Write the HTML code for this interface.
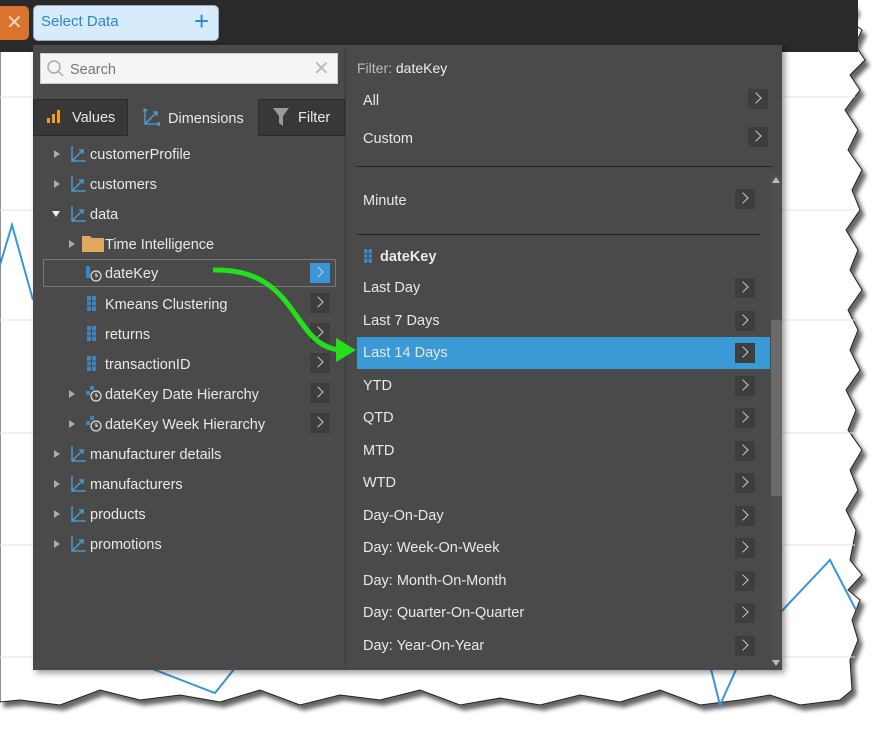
<!DOCTYPE html>
<html><head><meta charset="utf-8"><style>
*{margin:0;padding:0;box-sizing:border-box}
body{width:889px;height:739px;background:#fff;position:relative;overflow:hidden;font-family:"Liberation Sans",sans-serif;font-size:14.5px;color:#e8e8e8}
.a{position:absolute}
.pane{background:#4a4a4a}
.row{position:absolute;height:20px;line-height:22px;white-space:nowrap}
.chev{position:absolute;width:20px;height:20px;background:#3e3e3e}
.chev:after{content:"";position:absolute;left:4px;top:5px;width:7px;height:7px;border-right:1.5px solid #ccc;border-top:1.5px solid #ccc;transform:rotate(45deg)}
.tri{position:absolute;width:0;height:0;border-left:6px solid #aaa;border-top:4px solid transparent;border-bottom:4px solid transparent}
.trid{position:absolute;width:0;height:0;border-top:6px solid #eee;border-left:4px solid transparent;border-right:4px solid transparent}
</style></head><body>
<svg class="a" style="left:0;top:0" width="889" height="739">
<defs><filter id="s"><feDropShadow dx="4" dy="5" stdDeviation="2" flood-color="#000" flood-opacity=".6"/></filter></defs>
<path filter="url(#s)" fill="#fff" stroke="#222" stroke-width="1" d="M0,0 L850,0 856,10 848,20 862,30 855,45 865,60 850,75 860,90 845,110 858,130 848,150 862,170 852,190 860,210 846,230 858,250 850,270 862,290 848,310 858,330 850,350 860,370 846,390 856,410 848,430 862,450 850,470 858,490 846,510 856,530 850,560 862,575 848,590 860,600 852,620 858,640 850,660 852,690 840,700 800,705 770,695 740,700 700,705 660,690 620,702 580,695 540,705 500,698 460,705 420,690 380,700 340,695 300,705 260,690 220,702 180,695 140,700 100,690 60,705 20,700 0,702Z"/>
<rect x="0" y="0" width="858" height="52" fill="#2a2a2a"/>
<g stroke="#e6e6e6" stroke-width="1"><line x1="0" y1="97" x2="855" y2="97"/><line x1="0" y1="210" x2="855" y2="210"/><line x1="0" y1="320" x2="855" y2="320"/><line x1="0" y1="433" x2="855" y2="433"/><line x1="0" y1="545" x2="855" y2="545"/><line x1="0" y1="657" x2="855" y2="657"/></g>
<g stroke="#3a96d8" stroke-width="2" fill="none"><polyline points="0,265 12,225 33,300"/><polyline points="150,668 215,693 235,668"/><polyline points="710,665 720,705 745,650 830,560 856,610"/></g>
</svg>
<div class="a" style="left:0;top:6px;width:29px;height:34px;background:#d9742f;border-radius:0 5px 5px 0"></div>
<div class="a" style="left:6px;top:10px;color:#f3d6c0;font-size:20px">✕</div>
<div class="a" style="left:33px;top:5px;width:186px;height:36px;background:#d6ebfb;border-radius:5px;border:1px solid #9ab"></div>
<div class="a" style="left:41px;top:13px;color:#2d86c9;font-size:15px">Select Data</div>
<div class="a" style="left:194px;top:6px;color:#2d86c9;font-size:26px">+</div>
<div class="a pane" style="left:33px;top:45px;width:749px;height:625px;box-shadow:3px 3px 6px rgba(0,0,0,.4)"></div>
<div class="a" style="left:345px;top:45px;width:1px;height:625px;background:#3a3a3a"></div>
<div class="a" style="left:40px;top:53px;width:298px;height:31px;background:#f4f4f4;border:1px solid #ccc"></div>
<svg class="a" style="left:46px;top:59px" width="20" height="20"><circle cx="8" cy="8" r="6" stroke="#aaa" stroke-width="1.5" fill="none"/><line x1="12" y1="12" x2="17" y2="17" stroke="#aaa" stroke-width="1.5"/></svg>
<div class="a" style="left:70px;top:62px;color:#777">Search</div>
<div class="a" style="left:313px;top:56px;color:#bbb;font-size:20px">✕</div>
<div class="a" style="left:33px;top:99px;width:95px;height:37px;background:#383838;border:1px solid #2c2c2c"></div>
<div class="a" style="left:258px;top:99px;width:87px;height:37px;background:#383838;border:1px solid #2c2c2c"></div>
<svg class="a" style="left:47px;top:110px" width="16" height="14"><rect x="0" y="8" width="3" height="5" fill="#f59a1e"/><rect x="5" y="4" width="3" height="9" fill="#f59a1e"/><rect x="10" y="0" width="3" height="13" fill="#f59a1e"/></svg>
<div class="a" style="left:72px;top:110px">Values</div>
<svg class="a" style="left:143px;top:108px" width="18" height="18" fill="none" stroke="#4aa3dd" stroke-width="1.3"><path d="M2,1V16H17M2,16L14,4M10,4H14V8M2,1L0,3M2,1L4,3M17,16L15,14M17,16L15,18"/></svg>
<div class="a" style="left:168px;top:111px">Dimensions</div>
<svg class="a" style="left:273px;top:108px" width="16" height="18"><path d="M0,0H16L10,8V18L6,15V8Z" fill="#999"/></svg>
<div class="a" style="left:298px;top:110px">Filter</div>

<div class="a" style="left:43px;top:259px;width:293px;height:28px;border:1px solid #777"></div>
<div class="tri" style="left:54px;top:150px"></div><div class="row" style="left:90px;top:144px">customerProfile</div>
<div class="tri" style="left:54px;top:180px"></div><div class="row" style="left:90px;top:174px">customers</div>
<div class="trid" style="left:52px;top:211px"></div><div class="row" style="left:90px;top:204px">data</div>
<div class="tri" style="left:69px;top:240px"></div><div class="row" style="left:105px;top:234px">Time Intelligence</div>
<div class="row" style="left:105px;top:263px">dateKey</div><div class="chev" style="left:310px;top:263px;background:#3a96d8"></div>
<div class="row" style="left:105px;top:294px">Kmeans Clustering</div><div class="chev" style="left:310px;top:293px"></div>
<div class="row" style="left:105px;top:324px">returns</div><div class="chev" style="left:310px;top:323px"></div>
<div class="row" style="left:105px;top:354px">transactionID</div><div class="chev" style="left:310px;top:353px"></div>
<div class="tri" style="left:69px;top:390px"></div><div class="row" style="left:105px;top:384px">dateKey Date Hierarchy</div><div class="chev" style="left:310px;top:383px"></div>
<div class="tri" style="left:69px;top:420px"></div><div class="row" style="left:105px;top:414px">dateKey Week Hierarchy</div><div class="chev" style="left:310px;top:413px"></div>
<div class="tri" style="left:54px;top:450px"></div><div class="row" style="left:90px;top:444px">manufacturer details</div>
<div class="tri" style="left:54px;top:480px"></div><div class="row" style="left:90px;top:474px">manufacturers</div>
<div class="tri" style="left:54px;top:510px"></div><div class="row" style="left:90px;top:504px">products</div>
<div class="tri" style="left:54px;top:540px"></div><div class="row" style="left:90px;top:534px">promotions</div>

<div class="row" style="left:357px;top:57px;color:#bbb;font-size:14px">Filter: <span style="color:#eee">dateKey</span></div>
<div class="row" style="left:363px;top:90px">All</div><div class="chev" style="left:748px;top:89px"></div>
<div class="row" style="left:363px;top:128px">Custom</div><div class="chev" style="left:748px;top:127px"></div>
<div class="a" style="left:357px;top:166px;width:416px;height:1px;background:#222"></div>
<div class="row" style="left:363px;top:190px">Minute</div><div class="chev" style="left:735px;top:189px"></div>
<div class="a" style="left:357px;top:234px;width:403px;height:1px;background:#222"></div>
<div class="row" style="left:380px;top:246px;font-weight:bold">dateKey</div>
<div class="a" style="left:357px;top:337px;width:413px;height:32px;background:#3a9ad6"></div>
<div class="a" style="left:771px;top:175px;width:11px;height:490px;background:#4f4f4f"></div>
<div class="a" style="left:771px;top:320px;width:11px;height:176px;background:#6a6a6a"></div>
<div class="trid" style="left:772px;top:177px;transform:rotate(180deg);border-top-color:#bbb"></div>
<div class="trid" style="left:772px;top:660px;border-top-color:#bbb"></div>
<div id="r"></div>
<script>
var items=["Last Day","Last 7 Days","Last 14 Days","YTD","QTD","MTD","WTD","Day-On-Day","Day: Week-On-Week","Day: Month-On-Month","Day: Quarter-On-Quarter","Day: Year-On-Year"],h="";
items.forEach(function(t,i){var y=Math.round(277+i*32.5);h+='<div class="row" style="left:363px;top:'+y+'px">'+t+'</div><div class="chev" style="left:735px;top:'+(y+1)+'px"></div>';});
document.getElementById("r").innerHTML=h;
</script>
<svg class="a" style="left:0;top:0;z-index:5" width="889" height="739">
<g fill="none" stroke="#4aa3dd" stroke-width="1.3">
<path d="M72,146V161H86M72,161L83,150M79,150H83V154"/><path d="M72,176V191H86M72,191L83,180M79,180H83V184"/><path d="M72,206V221H86M72,221L83,210M79,210H83V214"/>
<path d="M72,446V461H86M72,461L83,450M79,450H83V454"/><path d="M72,476V491H86M72,491L83,480M79,480H83V484"/><path d="M72,506V521H86M72,521L83,510M79,510H83V514"/><path d="M72,536V551H86M72,551L83,540M79,540H83V544"/>
</g>
<g fill="#3d86c0"><rect x="87" y="296" width="9" height="15"/><rect x="87" y="326" width="9" height="15"/><rect x="87" y="356" width="9" height="15"/><rect x="364" y="249" width="8" height="14"/></g>
<g stroke="#4a4a4a" stroke-width="1"><line x1="87" y1="301" x2="96" y2="301"/><line x1="87" y1="306" x2="96" y2="306"/><line x1="91.5" y1="296" x2="91.5" y2="311"/><line x1="87" y1="331" x2="96" y2="331"/><line x1="87" y1="336" x2="96" y2="336"/><line x1="91.5" y1="326" x2="91.5" y2="341"/><line x1="87" y1="361" x2="96" y2="361"/><line x1="87" y1="366" x2="96" y2="366"/><line x1="91.5" y1="356" x2="91.5" y2="371"/><line x1="364" y1="254" x2="372" y2="254"/><line x1="364" y1="258" x2="372" y2="258"/><line x1="368" y1="249" x2="368" y2="263"/></g>
<path d="M82,236h8l2,2h12v14h-22z" fill="#e0a85c"/>
<g fill="#3d86c0"><rect x="86" y="266" width="4" height="12"/><rect x="86" y="391" width="4" height="4"/><rect x="90" y="386" width="4" height="4"/><rect x="86" y="421" width="4" height="4"/><rect x="90" y="416" width="4" height="4"/></g>
<g fill="none" stroke="#ddd" stroke-width="1.2"><circle cx="96" cy="276" r="5"/><circle cx="96" cy="396" r="5"/><circle cx="96" cy="426" r="5"/><path d="M96,273v3h2M96,393v3h2M96,423v3h2"/></g>
<path d="M213,270 C300,268 290,345 340,350" fill="none" stroke="#22e01a" stroke-width="5"/>
<path d="M336,338 L356,350 L336,362Z" fill="#22e01a"/>
</svg>
</body></html>
